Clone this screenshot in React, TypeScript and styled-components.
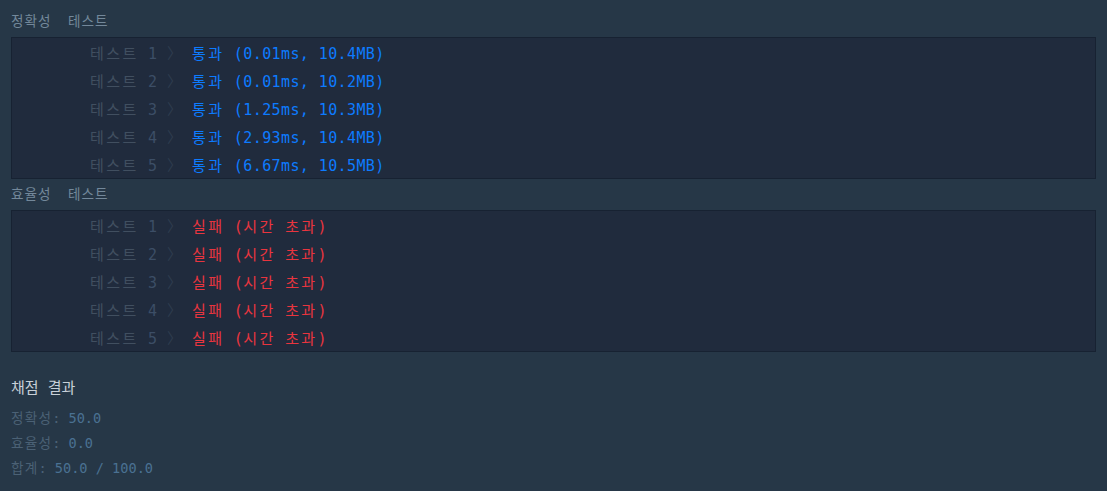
import React from 'react';
import styled, { createGlobalStyle } from 'styled-components';

const GlobalStyle = createGlobalStyle`
  html, body {
    margin: 0;
    padding: 0;
    background: #263747;
  }
  body {
    font-family: "DejaVu Sans Mono", "Noto Sans CJK KR", monospace;
  }
`;

type Result = { passed: boolean; text: string };

const correctness: Result[] = [
  { passed: true, text: '통과 (0.01ms, 10.4MB)' },
  { passed: true, text: '통과 (0.01ms, 10.2MB)' },
  { passed: true, text: '통과 (1.25ms, 10.3MB)' },
  { passed: true, text: '통과 (2.93ms, 10.4MB)' },
  { passed: true, text: '통과 (6.67ms, 10.5MB)' },
];

const efficiency: Result[] = [1, 2, 3, 4, 5].map(() => ({ passed: false, text: '실패 (시간 초과)' }));

// the console font draws hangul on a full-width cell, so widen hangul runs a little
function Mono({ text, spread }: { text: string; spread: number }) {
  return (
    <>
      {text.split(/([가-힣]+)/).map((part, i) =>
        /[가-힣]/.test(part) ? (
          <Hangul key={i} spread={spread}>
            {part}
          </Hangul>
        ) : (
          part
        )
      )}
    </>
  );
}

function TestGroup({ title, results }: { title: string; results: Result[] }) {
  return (
    <>
      <GroupTitle>
        <Mono text={title} spread={1} />
      </GroupTitle>
      <Box>
        {results.map((r, i) => (
          <Row key={i}>
            <Label>
              <Mono text="테스트" spread={2.4} /> <Digit>{i + 1}</Digit> <Chevron>〉</Chevron>
            </Label>
            <Outcome passed={r.passed}>
              <Mono text={r.text} spread={2.4} />
            </Outcome>
          </Row>
        ))}
      </Box>
    </>
  );
}

function App() {
  return (
    <>
      <GlobalStyle />
      <Page>
        <TestGroup title="정확성  테스트" results={correctness} />
        <TestGroup title="효율성  테스트" results={efficiency} />
        <Summary>
          <SummaryTitle>채점 결과</SummaryTitle>
          <ScoreLine>
            <Mono text="정확성" spread={1.2} />: <Num>50.0</Num>
          </ScoreLine>
          <ScoreLine>
            <Mono text="효율성" spread={1.2} />: <Num>0.0</Num>
          </ScoreLine>
          <ScoreLine>
            <Mono text="합계" spread={1.2} />: <Num>50.0 / 100.0</Num>
          </ScoreLine>
        </Summary>
      </Page>
    </>
  );
}

export default App;

const Page = styled.div`
  min-height: 100vh;
  box-sizing: border-box;
  padding: 6px 11px 12px 11px;
  background: #263747;
`;

const Hangul = styled.span<{ spread: number }>`
  letter-spacing: ${({ spread }) => spread}px;
`;

const GroupTitle = styled.div`
  height: 31px;
  line-height: 30px;
  font-size: 13.6px;
  color: #73889a;
  white-space: pre;
`;

const Box = styled.div`
  background: #202b3d;
  border: 1px solid #172232;
`;

const Row = styled.div`
  display: flex;
  align-items: center;
  height: 28px;
  font-size: 15px;
  letter-spacing: 0.4px;
  white-space: pre;
`;

const Label = styled.span`
  box-sizing: border-box;
  width: 180px;
  padding-left: 78px;
  color: #414f60;
`;

const Digit = styled.span`
  color: #3c4e66;
`;

const Chevron = styled.span`
  color: #2e3c4e;
`;

const Outcome = styled.span<{ passed: boolean }>`
  color: ${({ passed }) => (passed ? '#0d7bff' : '#e9353f')};
`;

const Summary = styled.div`
  margin-top: 24px;
`;

const SummaryTitle = styled.div`
  height: 24px;
  line-height: 24px;
  font-size: 15px;
  color: #c8d0d8;
  margin-bottom: 6px;
`;

const ScoreLine = styled.div`
  height: 25px;
  line-height: 25px;
  font-size: 13.6px;
  color: #4b6175;
  white-space: pre;
`;

const Num = styled.span`
  color: #4a7192;
`;
